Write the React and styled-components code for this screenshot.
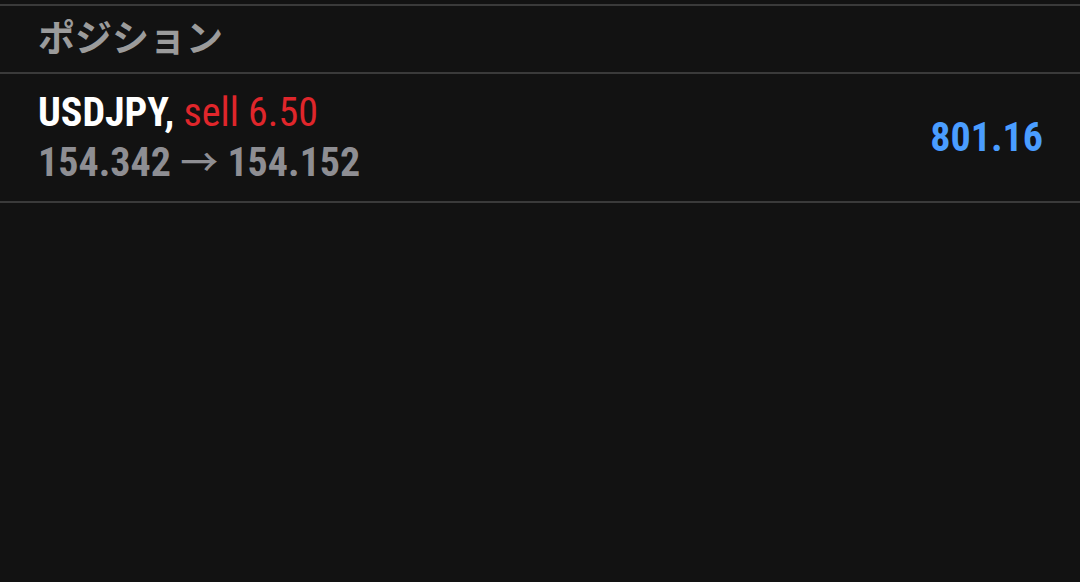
import React from 'react';
import styled, { createGlobalStyle } from 'styled-components';

const GlobalStyle = createGlobalStyle`
  html, body {
    margin: 0;
    padding: 0;
    background: #121212;
  }
  body {
    font-family: Roboto, "Noto Sans CJK JP", sans-serif;
  }
`

const Page = styled.div`
  min-height: 100vh;
  padding-top: 4px;
  background: #121212;
  box-sizing: border-box;
`

const Section = styled.div`
  border-top: 2px solid #3a3a3a;
`

const SectionTitle = styled.div`
  height: 68px;
  box-sizing: border-box;
  padding: 0 38px 7px;
  display: flex;
  align-items: center;
  font-family: "Noto Sans CJK JP", sans-serif;
  font-size: 37px;
  font-weight: 700;
  color: #9b9b9b;
  border-bottom: 2px solid #3a3a3a;
`

const Row = styled.div`
  height: 127px;
  display: flex;
  align-items: center;
  justify-content: space-between;
  padding: 0 37px 0 38px;
  border-bottom: 2px solid #3a3a3a;
  font-family: Roboto, sans-serif;
  font-stretch: 75%;
`

const Info = styled.div`
  display: flex;
  flex-direction: column;
`

const Line = styled.div`
  font-size: 40px;
  line-height: 47px;
  white-space: nowrap;
`

const Symbol = styled.span`
  font-weight: 700;
  color: #ffffff;
`

const Side = styled.span`
  color: ${p => (p.$sell ? '#e0262b' : '#2f8cff')};
`

const Prices = styled(Line)`
  font-weight: 700;
  color: #8e8e93;
`

const Arrow = styled.span`
  font-family: "Noto Sans CJK JP", sans-serif;
  font-weight: 500;
  font-size: 38px;
`

const Profit = styled.div`
  font-size: 40px;
  font-weight: 700;
  color: #4a9dff;
`

const positions = [
  { symbol: 'USDJPY', side: 'sell', volume: '6.50', open: '154.342', current: '154.152', profit: '801.16' },
]

const App = () => {
  return (
    <Page>
      <GlobalStyle />
      <Section>
        <SectionTitle>ポジション</SectionTitle>
        {positions.map(p => (
          <Row key={p.symbol}>
            <Info>
              <Line>
                <Symbol>{p.symbol},</Symbol> <Side $sell={p.side === 'sell'}>{p.side} {p.volume}</Side>
              </Line>
              <Prices>{p.open} <Arrow>→</Arrow> {p.current}</Prices>
            </Info>
            <Profit>{p.profit}</Profit>
          </Row>
        ))}
      </Section>
    </Page>
  );
}

export default App;
